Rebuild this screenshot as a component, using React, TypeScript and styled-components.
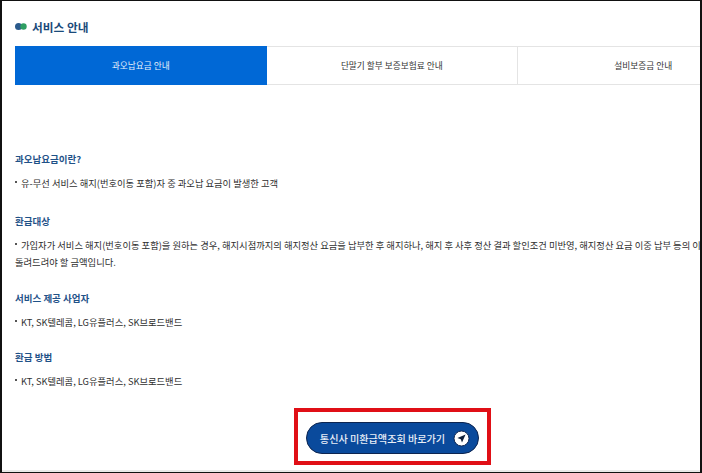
import React from 'react';
import styled, { createGlobalStyle } from 'styled-components';

const tabs = ['과오납요금 안내', '단말기 할부 보증보험료 안내', '설비보증금 안내'];

const sections = [
  {
    title: '과오납요금이란?',
    text: '유-무선 서비스 해지(번호이동 포함)자 중 과오납 요금이 발생한 고객',
  },
  {
    title: '환급대상',
    text: '가입자가 서비스 해지(번호이동 포함)을 원하는 경우, 해지시점까지의 해지정산 요금을 납부한 후 해지하나, 해지 후 사후 정산 결과 할인조건 미반영, 해지정산 요금 이중 납부 등의 이유로 돌려드려야 할 금액입니다.',
  },
  { title: '서비스 제공 사업자', text: 'KT, SK텔레콤, LG유플러스, SK브로드밴드' },
  { title: '환급 방법', text: 'KT, SK텔레콤, LG유플러스, SK브로드밴드' },
];

export default function App(): JSX.Element {
  return (
    <>
      <GlobalStyle />
      <Frame>
        <Header>
          <Dots width='12' height='9' viewBox='0 0 12 9'>
            <circle cx='3.5' cy='4.5' r='3.5' fill='#2a5a8c' />
            <circle cx='8.5' cy='4.5' r='3.2' fill='#2e9e62' />
          </Dots>
          <PageTitle>서비스 안내</PageTitle>
        </Header>
        <Tabs>
          {tabs.map((tab, index) => (
            <Tab key={tab} $active={index === 0}>
              {tab}
            </Tab>
          ))}
        </Tabs>
        <Content>
          {sections.map((section) => (
            <Section key={section.title}>
              <SectionTitle>{section.title}</SectionTitle>
              <Bullet>{section.text}</Bullet>
            </Section>
          ))}
        </Content>
        <ButtonRow>
          <LinkButton>
            통신사 미환급액조회 바로가기
            <svg width='17' height='17' viewBox='0 0 17 17'>
              <circle cx='8.5' cy='8.5' r='7.5' fill='#fff' stroke='#0d2550' strokeWidth='1' />
              <path d='M12.6 4.4 4.4 8l3.4 1.2 1.2 3.4z' fill='#10203a' />
            </svg>
          </LinkButton>
          <Highlight />
        </ButtonRow>
      </Frame>
    </>
  );
}

const GlobalStyle = createGlobalStyle`
  html, body {
    margin: 0;
    padding: 0;
    background: #fff;
  }
  * {
    box-sizing: border-box;
  }
`;

const Frame = styled.div`
  width: 702px;
  height: 473px;
  overflow: hidden;
  border-top: 1px solid #111;
  border-left: 2px solid #111;
  border-right: 2px solid #111;
  border-bottom: 1px solid #111;
  padding: 17px 0 0 13px;
  background: #fff;
  box-shadow: inset 0 -2px 0 #e9e9e9;
  font-family: 'Noto Sans CJK KR', 'Noto Sans', sans-serif;
`;

const Header = styled.div`
  display: flex;
  align-items: center;
  gap: 5px;
  height: 17px;
`;

const Dots = styled.svg`
  flex: none;
`;

const PageTitle = styled.h1`
  margin: 0;
  font-size: 11.7px;
  font-weight: 700;
  color: #1a4a7a;
  white-space: nowrap;
`;

const Tabs = styled.div`
  display: flex;
  width: 760px;
  height: 39px;
  margin-top: 11px;
`;

const Tab = styled.div<{ $active: boolean }>`
  flex: 0 0 251.5px;
  display: flex;
  align-items: center;
  justify-content: center;
  font-size: 8.7px;
  color: ${({ $active }) => ($active ? '#e8f1fb' : '#333')};
  background: ${({ $active }) => ($active ? '#0068d6' : '#fff')};
  border: 1px solid ${({ $active }) => ($active ? '#0068d6' : '#e4e4e4')};
  border-left-width: ${({ $active }) => ($active ? 1 : 0)}px;
`;

const Content = styled.div`
  display: flex;
  flex-direction: column;
  gap: 20.5px;
  width: 725px;
  margin-top: 68px;
`;

const Section = styled.section`
  display: flex;
  flex-direction: column;
  gap: 10px;

  &:first-child {
    padding-bottom: 2.5px;
  }
`;

const SectionTitle = styled.h2`
  margin: 0;
  font-size: 9.5px;
  line-height: 12px;
  font-weight: 700;
  color: #1f5288;
`;

const Bullet = styled.p`
  position: relative;
  margin: 0;
  text-indent: 6px;
  font-size: 9.3px;
  line-height: 17px;
  color: #2e2e2e;
  word-break: keep-all;

  &::before {
    content: '';
    position: absolute;
    left: 0;
    top: 6px;
    width: 2px;
    height: 2px;
    background: #555;
  }
`;

const ButtonRow = styled.div`
  position: relative;
  display: flex;
  justify-content: center;
  width: 173px;
  margin: 32px 0 0 291px;
`;

const LinkButton = styled.button`
  display: flex;
  align-items: center;
  justify-content: center;
  gap: 8px;
  width: 173px;
  height: 32px;
  padding: 0 0 0 5px;
  border: 1px solid #0d2550;
  border-radius: 16px;
  background: #0a4a9c;
  color: #e8eef7;
  font-family: inherit;
  font-size: 10.1px;
  font-weight: 500;
  white-space: nowrap;
`;

const Highlight = styled.div`
  position: absolute;
  top: -14px;
  left: -12px;
  width: 197px;
  height: 57px;
  border: 4px solid #e00f16;
  pointer-events: none;
`;
